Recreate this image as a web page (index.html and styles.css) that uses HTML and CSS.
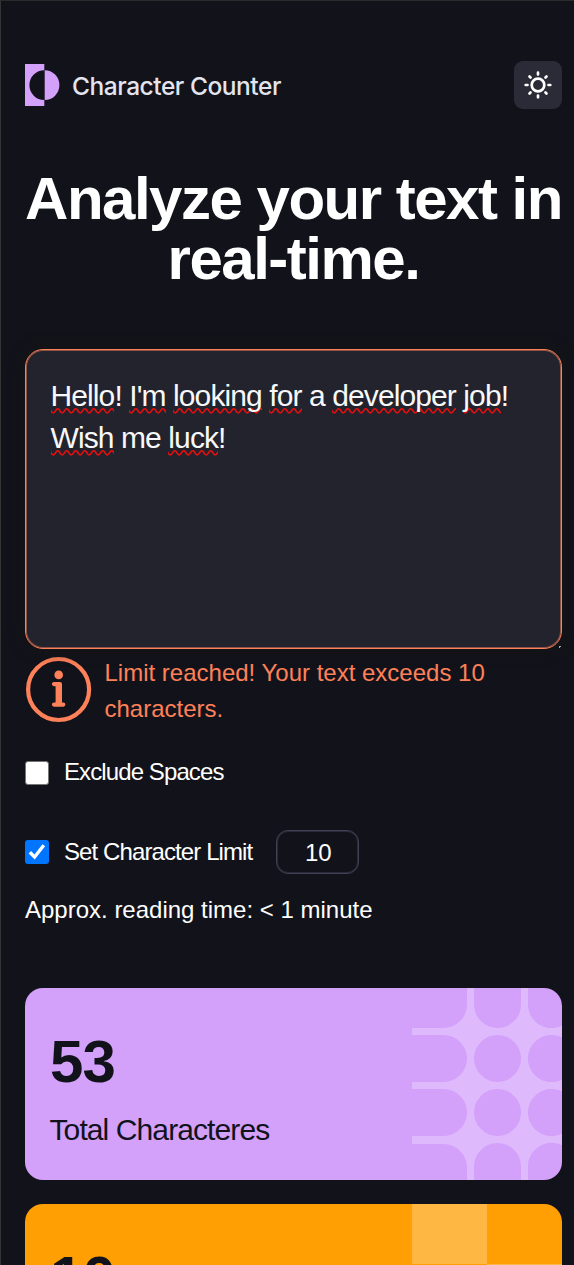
FILE: index.html
```html
<!DOCTYPE html>
<html lang="en">
<head>
<meta charset="utf-8">
<title>Character Counter</title>
<link rel="stylesheet" href="styles.css">
</head>
<body>
<div class="page">
  <header class="header">
    <div class="logo">
      <svg class="logo-mark" width="35" height="42" viewBox="0 0 35 42">
        <path fill="#d3a0fa" d="M0 0H19.300V6.200A14.900 14.900 0 0 0 19.300 36V42H0Z"/>
        <path fill="#d3a0fa" d="M19.700 6.200A14.700 14.900 0 0 1 19.700 36Z"/>
      </svg>
      <span class="logo-text">Character Counter</span>
    </div>
    <button class="theme" aria-label="Toggle theme">
      <svg width="30" height="30" viewBox="0 0 30 30" fill="none" stroke="#fff" stroke-width="2.700" stroke-linecap="round">
        <circle cx="15" cy="15" r="6.300"/>
        <path d="M15 2.700V4.500M15 25.500V27.300M2.700 15H4.500M25.500 15H27.300M6.500 6.500L7.500 7.500M22.500 22.500L23.500 23.500M6.500 23.500L7.500 22.500M22.500 7.500L23.500 6.500"/>
      </svg>
    </button>
  </header>

  <h1 class="title">Analyze your text in real-time.</h1>

  <div class="editor">
    <span class="typo">Hello</span>! <span class="typo">I'm</span> <span class="typo">looking</span> <span class="typo">for</span> a <span class="typo">developer</span> <span class="typo">job</span>!<br><span class="typo">Wish</span> me <span class="typo">luck</span>!
    <i class="grip"></i>
  </div>

  <div class="error">
    <svg class="error-icon" width="67" height="67" viewBox="0 0 67 67">
      <circle cx="33.600" cy="33.500" r="30.500" fill="none" stroke="#fe8159" stroke-width="4.200"/>
      <circle cx="33.700" cy="18.900" r="4.300" fill="#fe8159"/>
      <path fill="#fe8159" d="M29 26H35Q37 26 37 28V46.500H38.300A2.100 2.100 0 0 1 38.300 50.700H29A2.100 2.100 0 0 1 29 46.500H30.600V30.200H29A2.100 2.100 0 0 1 29 26Z"/>
    </svg>
    <p class="error-text">Limit reached! Your text exceeds 10 characters.</p>
  </div>

  <div class="options">
    <div class="option">
      <span class="box"></span><span class="option-label">Exclude Spaces</span>
    </div>
    <div class="option">
      <span class="box box-on"><svg width="24" height="24" viewBox="0 0 24 24"><path d="M4.800 12.200L9.600 17L18.800 5.300" fill="none" stroke="#fff" stroke-width="3.400"/></svg></span><span class="option-label">Set Character Limit</span>
      <span class="limit">10</span>
    </div>
    <p class="reading">Approx. reading time: &lt; 1 minute</p>
  </div>

  <section class="cards">
    <article class="card card-purple">
      <svg class="pattern" width="150" height="192" viewBox="0 0 150 192">
        <path fill="#deb9fc" d="M55 0H62V16.500A23.500 23.500 0 0 0 109 16.500V0H116V16.500A23.500 23.500 0 0 0 150 37.500V49.500A23.500 23.500 0 1 0 150 91.500V103.500A23.500 23.500 0 1 0 150 145.500V157.300A23.500 23.500 0 0 0 116 178.500V192H109V178.500A23.500 23.500 0 0 0 62 178.500V192H55V179.500A23.500 23.500 0 0 0 31.500 156H0V148H31.500A23.500 23.500 0 0 0 31.500 101H0V94H31.500A23.500 23.500 0 0 0 31.500 47H0V40H31.500A23.500 23.500 0 0 0 55 16.500Z"/>
        <g fill="#d3a0fa"><circle cx="85.500" cy="70.500" r="23.500"/><circle cx="85.500" cy="124.500" r="23.500"/></g>
      </svg>
      <strong class="number">53</strong>
      <span class="label">Total Characteres</span>
    </article>
    <article class="card card-orange">
      <svg class="pattern" width="150" height="192" viewBox="0 0 150 192">
        <path fill="#ffb744" d="M0 0H75V60H0ZM75 60H150V120H75ZM0 120H75V180H0Z"/>
      </svg>
      <strong class="number">10</strong>
    </article>
  </section>
</div>
</body>
</html>
```
FILE: styles.css
```css
* { box-sizing: border-box; }
html { overflow: hidden; }
body {
  margin: 0;
  height: 1265px;
  overflow: hidden;
  background: #12131a;
  color: #fff;
  font-family: "Liberation Sans", Arial, sans-serif;
}
.page {
  height: 1265px;
  overflow: hidden;
  border-top: 1px solid #2b2b2e;
  border-left: 1px solid #333435;
  padding: 60px 12px 0 24px;
}
.header { display: flex; justify-content: space-between; align-items: center; height: 48px; }
.logo { display: flex; align-items: center; gap: 12px; }
.logo-mark { display: block; }
.logo-text {
  padding-top: 1px;
  font: 500 24.500px/48px Inter, sans-serif;
  letter-spacing: -0.46px;
  color: #e4e4ef;
  white-space: nowrap;
}
.theme {
  display: flex; align-items: center; justify-content: center;
  width: 48px; height: 48px; padding: 0;
  border: 0; border-radius: 9px; background: #2a2b37;
}
.title {
  margin: 60px 0 0;
  font-size: 60px; line-height: 60px; font-weight: 700;
  letter-spacing: -1.5px; text-align: center;
}
.editor {
  position: relative;
  height: 300px; margin-top: 60px; padding: 24.500px;
  border: 1px solid #fe8159; border-radius: 18px;
  background: #22232c;
  box-shadow: inset 0 0 0 1px rgba(254, 129, 89, 0.5), 0 0 15px #141414;
  font-size: 30px; line-height: 42px; letter-spacing: -0.9px;
  color: #f8f8fa;
}
.typo {
  padding-bottom: 2px;
  background: url("data:image/svg+xml,%3Csvg xmlns='http://www.w3.org/2000/svg' width='9' height='6'%3E%3Cpath d='M-2.250 .8C0 .8 0 4.900 2.250 4.900S4.500 .8 6.750 .8S9 4.900 11.250 4.900' fill='none' stroke='%23e80e0e' stroke-width='1.600'/%3E%3C/svg%3E") left bottom repeat-x;
}
.grip {
  position: absolute; right: 0; bottom: 0;
  width: 2px; height: 2px;
  border-top: 1px solid #aaa; border-left: 1px solid #aaa;
}
.error { display: flex; gap: 12.500px; margin-top: 6px; color: #fe8159; }
.error-icon { flex: none; margin-top: 1px; }
.error-text { margin: 0; font-size: 24px; line-height: 36px; }
.options { display: flex; flex-direction: column; margin-top: 23px; }
.option { display: flex; align-items: center; height: 44px; }
.option + .option { margin-top: 36px; }
.option-label { margin-left: 15px; font-size: 24px; letter-spacing: -0.9px; }
.box {
  width: 24px; height: 24px; border-radius: 3px;
  border: 1.500px solid #767676; background: #fff;
}
.option:first-child .box { margin-top: 1px; }
.box-on { border: 0; background: #0075ff; }
.box svg { display: block; }
.limit {
  width: 83px; height: 44px; margin-left: 24px; padding-left: 1px;
  border: 1px solid #404254; border-radius: 12px;
  box-shadow: inset 0 0 0 1px rgba(64, 66, 84, 0.5);
  font-size: 24px; line-height: 43px; text-align: center;
}
.reading { margin: 18px 0 0; font-size: 24px; line-height: 36px; }
.cards { display: flex; flex-direction: column; gap: 24px; margin-top: 60px; }
.card {
  position: relative; overflow: hidden;
  display: flex; flex-direction: column;
  height: 192px; padding: 42px 24px 0;
  border-radius: 18px; color: #12131a;
}
.card-purple { background: #d3a0fa; }
.card-orange { background: #ff9f04; }
.pattern { position: absolute; top: 0; right: 0; }
.number { padding-left: 1px; font-size: 60px; line-height: 64px; letter-spacing: -0.9px; }
.label { margin-top: 15px; padding-left: 0.500px; font-size: 30px; line-height: 42px; letter-spacing: -0.9px; }
```
